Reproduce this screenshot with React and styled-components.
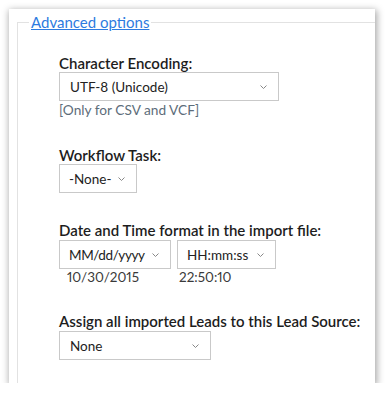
import React from 'react'
import styled, { createGlobalStyle } from 'styled-components'

const Global = createGlobalStyle`
    body {
        margin: 0;
        background: #ffffff;
        font-family: Lato, "Liberation Sans", sans-serif;
        font-variant-numeric: proportional-nums;
    }
`

const Panel = styled.div`
    margin: 9px 0 0 9px;
    width: 366px;
    height: 374px;
    background: #ffffff;
    box-shadow: 1px 2px 7px 1px rgba(0, 0, 0, 0.35);
    overflow: hidden;
    box-sizing: border-box;
`

const Fieldset = styled.fieldset`
    margin: 4px 0 0 8px;
    padding: 0;
    min-width: 0;
    height: 400px;
    border: none;
    border-top: 1px solid #e2e2e2;
    border-left: 1px solid #e2e2e2;
`

const Legend = styled.legend`
    margin-left: 11px;
    padding: 0 2px;
    font-size: 15px;
    color: #2d7be0;
    text-decoration: underline;
    line-height: 18px;
`

const Body = styled.div`
    padding: 24px 0 0 41px;
`

const Group = styled.div`
    margin-top: ${props => props.gap || 0}px;
`

const Label = styled.div`
    font-size: 15px;
    font-weight: 600;
    color: #1d1d1d;
    line-height: 16px;
    margin-bottom: ${props => props.space || 1}px;
`

const Row = styled.div`
    display: flex;
    gap: 6px;
`

const Cell = styled.div`
    display: flex;
    flex-direction: column;
`

const Select = styled.div`
    box-sizing: border-box;
    width: ${props => props.w}px;
    height: 29px;
    border: 1px solid #c9c9c9;
    display: flex;
    align-items: center;
    justify-content: space-between;
    gap: 6px;
    padding: 0 11px 0 ${props => props.pl || 10}px;
    font-size: 13.5px;
    letter-spacing: ${props => props.tight ? -0.4 : 0}px;
    color: #222;
    svg {
        flex-shrink: 0;
    }
`

const Note = styled.div`
    font-size: 13.7px;
    line-height: 16px;
    color: #5d6d7a;
    margin-top: 1px;
`

const Value = styled.div`
    font-size: 13.5px;
    line-height: 16px;
    color: #3a3a3a;
    padding-left: ${props => props.pl || 0}px;
`

const Chevron = () => (
    <svg width="7" height="4" viewBox="0 0 7 4">
        <path d="M0.5 0.5 L3.5 3.5 L6.5 0.5" fill="none" stroke="#888" strokeWidth="1" />
    </svg>
)

const App = () => {
    return (
        <>
            <Global />
            <Panel>
                <Fieldset>
                    <Legend>Advanced options</Legend>
                    <Body>
                        <Group>
                            <Label>Character Encoding:</Label>
                            <Select w={220}>UTF-8 (Unicode)<Chevron /></Select>
                            <Note>[Only for CSV and VCF]</Note>
                        </Group>
                        <Group gap={29}>
                            <Label>Workflow Task:</Label>
                            <Select w={78} pl={9}>-None-<Chevron /></Select>
                        </Group>
                        <Group gap={29}>
                            <Label space={2}>Date and Time format in the import file:</Label>
                            <Row>
                                <Cell>
                                    <Select w={112} pl={9} tight>MM/dd/yyyy<Chevron /></Select>
                                    <Value pl={8}>10/30/2015</Value>
                                </Cell>
                                <Cell>
                                    <Select w={99} pl={9}>HH:mm:ss<Chevron /></Select>
                                    <Value pl={2}>22:50:10</Value>
                                </Cell>
                            </Row>
                        </Group>
                        <Group gap={28}>
                            <Label space={2}>Assign all imported Leads to this Lead Source:</Label>
                            <Select w={152}>None<Chevron /></Select>
                        </Group>
                    </Body>
                </Fieldset>
            </Panel>
        </>
    )
}

export default App
